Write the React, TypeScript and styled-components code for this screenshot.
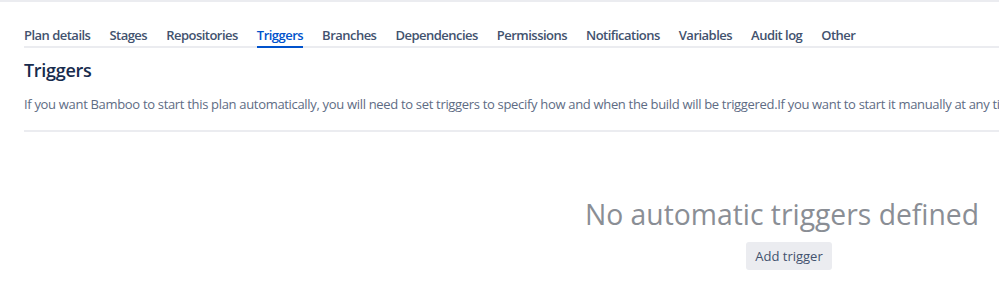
import React from "react";
import styled, { createGlobalStyle } from "styled-components";

const Global = createGlobalStyle`
  html, body { margin: 0; padding: 0; background: #ffffff; overflow: hidden; }
  body { font-family: "Open Sans", "Noto Sans", sans-serif; -webkit-font-smoothing: antialiased; }
`;

const Page = styled.div`
  border-top: 2px solid #ebecf0;
  padding-left: 24px;
  width: 1516px;
`;

const TabBar = styled.nav`
  display: flex;
  gap: 19px;
  margin-top: 22px;
  border-bottom: 2px solid #ebecf0;
`;

const Tab = styled.a<{ $active?: boolean }>`
  position: relative;
  font-size: 13px;
  font-weight: 600;
  letter-spacing: -0.52px;
  line-height: 22px;
  color: ${(p) => (p.$active ? "#0052cc" : "#42526e")};
  text-decoration: none;
  white-space: nowrap;
  &::after {
    content: "";
    display: ${(p) => (p.$active ? "block" : "none")};
    position: absolute;
    left: 0;
    right: 0;
    bottom: -2px;
    height: 2px;
    background: #0052cc;
  }
`;

const Heading = styled.h2`
  margin: 10px 0 0;
  font-size: 18px;
  font-weight: 600;
  letter-spacing: -0.3px;
  line-height: 24px;
  color: #172b4d;
`;

const Description = styled.p`
  margin: 12px 0 0;
  font-size: 13px;
  letter-spacing: -0.32px;
  line-height: 20px;
  color: #5e6c84;
  white-space: nowrap;
`;

const Separator = styled.hr`
  margin: 16px 0 0;
  border: none;
  border-top: 2px solid #ebecf0;
`;

const EmptyState = styled.section`
  display: flex;
  flex-direction: column;
  align-items: center;
  padding-top: 64px;
`;

const EmptyTitle = styled.h3`
  margin: 0;
  font-size: 28.3px;
  font-weight: 400;
  line-height: 36px;
  color: #8a8e95;
`;

const Button = styled.button`
  margin: 10px 0 0 14px;
  height: 28px;
  width: 86px;
  padding: 0;
  border: none;
  border-radius: 3px;
  background: #ebecf0;
  color: #42526e;
  font-family: inherit;
  font-size: 13px;
  cursor: pointer;
`;

const tabs = [
  "Plan details",
  "Stages",
  "Repositories",
  "Triggers",
  "Branches",
  "Dependencies",
  "Permissions",
  "Notifications",
  "Variables",
  "Audit log",
  "Other",
];

export default function App() {
  return (
    <>
      <Global />
      <Page>
        <TabBar>
          {tabs.map((t) => (
            <Tab key={t} href="#" $active={t === "Triggers"}>
              {t}
            </Tab>
          ))}
        </TabBar>
        <Heading>Triggers</Heading>
        <Description>
          If you want Bamboo to start this plan automatically, you will need to set triggers to specify how and when the
          build will be triggered.If you want to start it manually at any time, you can do so from the plan summary page.
        </Description>
        <Separator />
        <EmptyState>
          <EmptyTitle>No automatic triggers defined</EmptyTitle>
          <Button>Add trigger</Button>
        </EmptyState>
      </Page>
    </>
  );
}
